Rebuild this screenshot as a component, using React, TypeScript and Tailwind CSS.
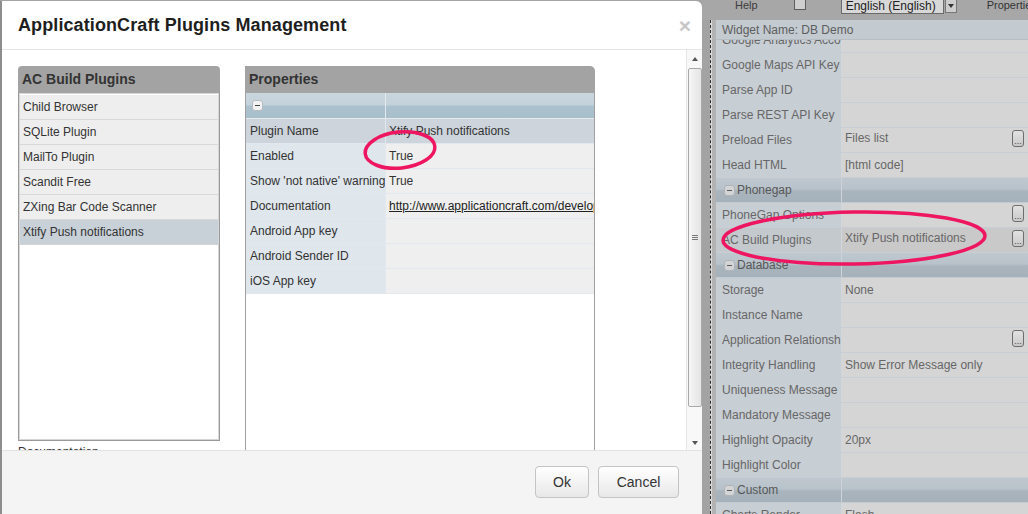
import React from "react";

const leftItems = [
  "Child Browser",
  "SQLite Plugin",
  "MailTo Plugin",
  "Scandit Free",
  "ZXing Bar Code Scanner",
  "Xtify Push notifications",
];

type PRow = { l: string; v?: string; link?: boolean; sel?: boolean };
const propRows: PRow[] = [
  { l: "Plugin Name", v: "Xtify Push notifications", sel: true },
  { l: "Enabled", v: "True" },
  { l: "Show 'not native' warning", v: "True" },
  { l: "Documentation", v: "http://www.applicationcraft.com/developers/documentation/", link: true },
  { l: "Android App key" },
  { l: "Android Sender ID" },
  { l: "iOS App key" },
];

type RRow = { l?: string; v?: string; btn?: boolean; sel?: boolean; g?: string };
const rightRows: RRow[] = [
  { l: "Google Analytics Account" },
  { l: "Google Maps API Key" },
  { l: "Parse App ID" },
  { l: "Parse REST API Key" },
  { l: "Preload Files", v: "Files list", btn: true },
  { l: "Head HTML", v: "[html code]" },
  { g: "Phonegap" },
  { l: "PhoneGap Options", btn: true },
  { l: "AC Build Plugins", v: "Xtify Push notifications", btn: true, sel: true },
  { g: "Database" },
  { l: "Storage", v: "None" },
  { l: "Instance Name" },
  { l: "Application Relationships", btn: true },
  { l: "Integrity Handling", v: "Show Error Message only" },
  { l: "Uniqueness Message" },
  { l: "Mandatory Message" },
  { l: "Highlight Opacity", v: "20px" },
  { l: "Highlight Color" },
  { g: "Custom" },
  { l: "Charts Render", v: "Flash" },
];

function Minus({ dim }: { dim?: boolean }) {
  return (
    <span
      className={
        dim
          ? "inline-flex items-center justify-center w-[11px] h-[11px] rounded-[3px] bg-[#d2d4d6] border border-[#b0b4b8]"
          : "inline-flex items-center justify-center w-[11px] h-[11px] rounded-[3px] bg-[#f2f2f2] border border-[#b8bcc0]"
      }
    >
      <span className={dim ? "w-[5px] h-[1px] bg-[#5c5c5c]" : "w-[5px] h-[1px] bg-[#444]"} />
    </span>
  );
}

function Dots() {
  return (
    <span className="absolute right-[4px] top-[2px] w-[12px] h-[17px] rounded-[3px] border border-[#6e6e6e] bg-[linear-gradient(#e2e2e2,#c9c9c9)] flex items-end justify-center text-[9px] leading-[10px] text-[#444]">
      ...
    </span>
  );
}

function Dialog() {
  return (
    <div className="w-[702px] shrink-0 mt-[1px] h-[513px] bg-white border-l-2 border-[#8d8d8d] rounded-tr-[6px] flex flex-col overflow-hidden">
      {/* header */}
      <div className="h-[49px] shrink-0 border-b border-[#e5e5e5] flex items-center justify-between pl-[16px] pr-[11px]">
        <h2 className="text-[18px] font-bold text-[#1e1e1e] tracking-[0.1px]">ApplicationCraft Plugins Management</h2>
        <span className="text-[21px] font-bold leading-none text-[#c6c6c6]">×</span>
      </div>
      {/* body */}
      <div className="h-[400px] shrink-0 flex">
        <div className="flex-1 flex gap-[25px] pl-[16px] pt-[16px] overflow-hidden">
          {/* left panel */}
          <div className="w-[202px] shrink-0 flex flex-col">
            <div className="h-[27px] shrink-0 rounded-t-[4px] bg-[#a3a3a3] flex items-center pl-[4px] text-[14px] font-bold text-[#333]">
              AC Build Plugins
            </div>
            <div className="h-[348px] shrink-0 border border-t-0 border-[#9a9a9a]">
              <div className="h-full border border-[#d6d6d6] bg-white pt-[1px]">
                {leftItems.map((it, i) => (
                  <div
                    key={it}
                    className={
                      i === leftItems.length - 1
                        ? "h-[25px] border-b border-[#d4d4d4] bg-[#c9d1d8] flex items-center pl-[3px] text-[12px] text-[#333]"
                        : "h-[25px] border-b border-[#d8d8d8] bg-[#eeeeee] flex items-center pl-[3px] text-[12px] text-[#333]"
                    }
                  >
                    {it}
                  </div>
                ))}
              </div>
            </div>
            <div className="mt-[4px] text-[12px] leading-[14px] text-[#333] whitespace-nowrap">Documentation</div>
          </div>
          {/* right panel */}
          <div className="w-[350px] shrink-0 flex flex-col">
            <div className="h-[27px] shrink-0 rounded-tr-[5px] bg-[#a3a3a3] flex items-center pl-[4px] text-[14px] font-bold text-[#333]">
              Properties
            </div>
            <div className="flex-1 border-x border-[#a0a0a0] bg-white">
              <div className="h-[26px] flex border-b border-[#e4e9ee] bg-[linear-gradient(#cad6de,#c4d2db_46%,#abc1cd_54%,#a8bfcc)]">
                <div className="w-[140px] shrink-0 border-r border-[#e4e9ee] flex items-center pl-[6px]">
                  <Minus />
                </div>
                <div className="flex-1" />
              </div>
              {propRows.map((r) => (
                <div key={r.l} className="h-[25px] flex border-b border-[#e2e8ed] text-[12px] text-[#333]">
                  <div
                    className={
                      r.sel
                        ? "w-[140px] shrink-0 border-r border-[#e2e8ed] bg-[#cdd4db] flex items-center pl-[4px] whitespace-nowrap overflow-hidden"
                        : "w-[140px] shrink-0 border-r border-[#e2e8ed] bg-[#dfe6ec] flex items-center pl-[4px] whitespace-nowrap overflow-hidden"
                    }
                  >
                    {r.l}
                  </div>
                  <div
                    className={
                      r.sel
                        ? "flex-1 min-w-0 bg-[#cdd4db] flex items-center pl-[3px] whitespace-nowrap overflow-hidden"
                        : "flex-1 min-w-0 bg-[#efefef] flex items-center pl-[3px] whitespace-nowrap overflow-hidden"
                    }
                  >
                    {r.link ? <span className="underline text-[#222]">{r.v}</span> : r.v}
                  </div>
                </div>
              ))}
            </div>
          </div>
        </div>
        {/* scrollbar */}
        <div className="w-[16px] shrink-0 border-l border-[#e6e6e6] bg-[#f8f8f8] flex flex-col items-center">
          <div className="h-[18px] shrink-0 flex items-center justify-center">
            <span className="w-0 h-0 border-x-[3px] border-x-transparent border-b-[4px] border-b-[#555]" />
          </div>
          <div className="w-[14px] h-[339px] shrink-0 rounded-[2px] border border-[#a9a9a9] bg-[linear-gradient(90deg,#f6f6f6,#e4e4e4)] flex flex-col items-center justify-center gap-[1px]">
            <span className="w-[6px] h-[1px] bg-[#777]" />
            <span className="w-[6px] h-[1px] bg-[#777]" />
            <span className="w-[6px] h-[1px] bg-[#777]" />
          </div>
          <div className="flex-1" />
          <div className="h-[14px] shrink-0 flex items-center justify-center">
            <span className="w-0 h-0 border-x-[3px] border-x-transparent border-t-[4px] border-t-[#555]" />
          </div>
        </div>
      </div>
      {/* footer */}
      <div className="flex-1 bg-[#f4f4f4] border-t border-[#e2e2e2] flex justify-end items-start gap-[9px] pt-[15px] pr-[23px]">
        <button className="w-[54px] h-[32px] rounded-[4px] border border-[#c4c4c4] bg-[linear-gradient(#ffffff,#e8e8e8)] text-[14px] text-[#333]">
          Ok
        </button>
        <button className="w-[81px] h-[32px] rounded-[4px] border border-[#c4c4c4] bg-[linear-gradient(#ffffff,#e8e8e8)] text-[14px] text-[#333]">
          Cancel
        </button>
      </div>
    </div>
  );
}

function RightArea() {
  return (
    <div className="flex-1 min-w-0 flex flex-col">
      {/* toolbar */}
      <div className="h-[20px] shrink-0 bg-[#a7a7a7] flex items-start pl-[33px] overflow-hidden">
        <span className="shrink-0 -mt-[1px] text-[11px] leading-[13px] text-[#3c3c3c]">Help</span>
        <span className="shrink-0 ml-[36px] -mt-[3px] w-[12px] h-[13px] border border-[#5e5e5e] bg-[#cfcfcf]" />
        <div className="shrink-0 ml-[35px] -mt-[2px] flex">
          <div className="w-[103px] h-[16px] border border-[#6a6a6a] bg-[#d8d8d8] pl-[4px] text-[12px] leading-[14px] text-[#222] whitespace-nowrap">
            English (English)
          </div>
          <div className="ml-[1px] w-[12px] h-[15px] border border-[#777] bg-[#cdcdcd] flex items-center justify-center">
            <span className="w-0 h-0 border-x-[3px] border-x-transparent border-t-[4px] border-t-[#333]" />
          </div>
        </div>
        <span className="shrink-0 ml-[30px] -mt-[1px] text-[11px] leading-[13px] text-[#333] whitespace-nowrap">Properties</span>
      </div>
      <div className="flex-1 flex min-h-0">
        {/* gutter */}
        <div className="w-[14px] shrink-0 flex">
          <div className="w-[8px] bg-[#a3a3a3]" />
          <div className="w-[2px] bg-[#d8d8d8] border-l border-dashed border-[#2e2e2e]" />
          <div className="flex-1 bg-[#b3b3b3]" />
        </div>
        {/* property grid */}
        <div className="flex-1 min-w-0 flex flex-col text-[12px] text-[#676767]">
          <div className="h-[20px] shrink-0 bg-[#c3cad0] border-b border-[#b6bec4] flex items-center pl-[6px] text-[#5e5e5e]">
            Widget Name: DB Demo
          </div>
          <div className="flex-1 overflow-hidden">
            <div className="-mt-[12px]">
              {rightRows.map((r, i) =>
                r.g ? (
                  <div
                    key={i}
                    className="h-[25px] flex border-b border-[#c3cbd1] bg-[linear-gradient(#bfc8cf,#b8c2ca_46%,#a9b4bd_54%,#a6b2bb)]"
                  >
                    <div className="w-[126px] shrink-0 border-r border-[#cdd3d8] flex items-center pl-[8px] gap-[2px] text-[#585858]">
                      <Minus dim />
                      <span>{r.g}</span>
                    </div>
                    <div className="flex-1" />
                  </div>
                ) : (
                  <div key={i} className="h-[25px] flex border-b border-[#c8ced3]">
                    <div
                      className={
                        r.sel
                          ? "w-[126px] shrink-0 border-r border-[#d2d7db] bg-[#c4c9cd] flex items-center pl-[6px] whitespace-nowrap overflow-hidden"
                          : "w-[126px] shrink-0 border-r border-[#d2d7db] bg-[#c7ced4] flex items-center pl-[6px] whitespace-nowrap overflow-hidden"
                      }
                    >
                      {r.l}
                    </div>
                    <div
                      className={
                        r.sel
                          ? "relative flex-1 min-w-0 bg-[#c9c9c9] flex items-center pl-[3px] whitespace-nowrap"
                          : "relative flex-1 min-w-0 bg-[#d5d5d5] flex items-center pl-[3px] whitespace-nowrap"
                      }
                    >
                      <span className={r.btn ? "-mt-[4px]" : ""}>{r.v}</span>
                      {r.btn ? <Dots /> : null}
                    </div>
                  </div>
                )
              )}
            </div>
          </div>
        </div>
      </div>
    </div>
  );
}

export default function App() {
  return (
    <div className="relative w-[1028px] h-[514px] overflow-hidden bg-[#a4a4a4] flex font-['Liberation_Sans',Arial,Helvetica,sans-serif]">
      <Dialog />
      <RightArea />
      <svg className="absolute left-0 top-0 pointer-events-none" width={1028} height={514}>
        <ellipse cx={400} cy={150} rx={35} ry={18} transform="rotate(-6 400 150)" fill="none" stroke="#ee1660" strokeWidth={3.5} />
        <ellipse cx={854} cy={238} rx={131} ry={26} transform="rotate(-1 854 238)" fill="none" stroke="#ee1660" strokeWidth={3.5} />
      </svg>
    </div>
  );
}
